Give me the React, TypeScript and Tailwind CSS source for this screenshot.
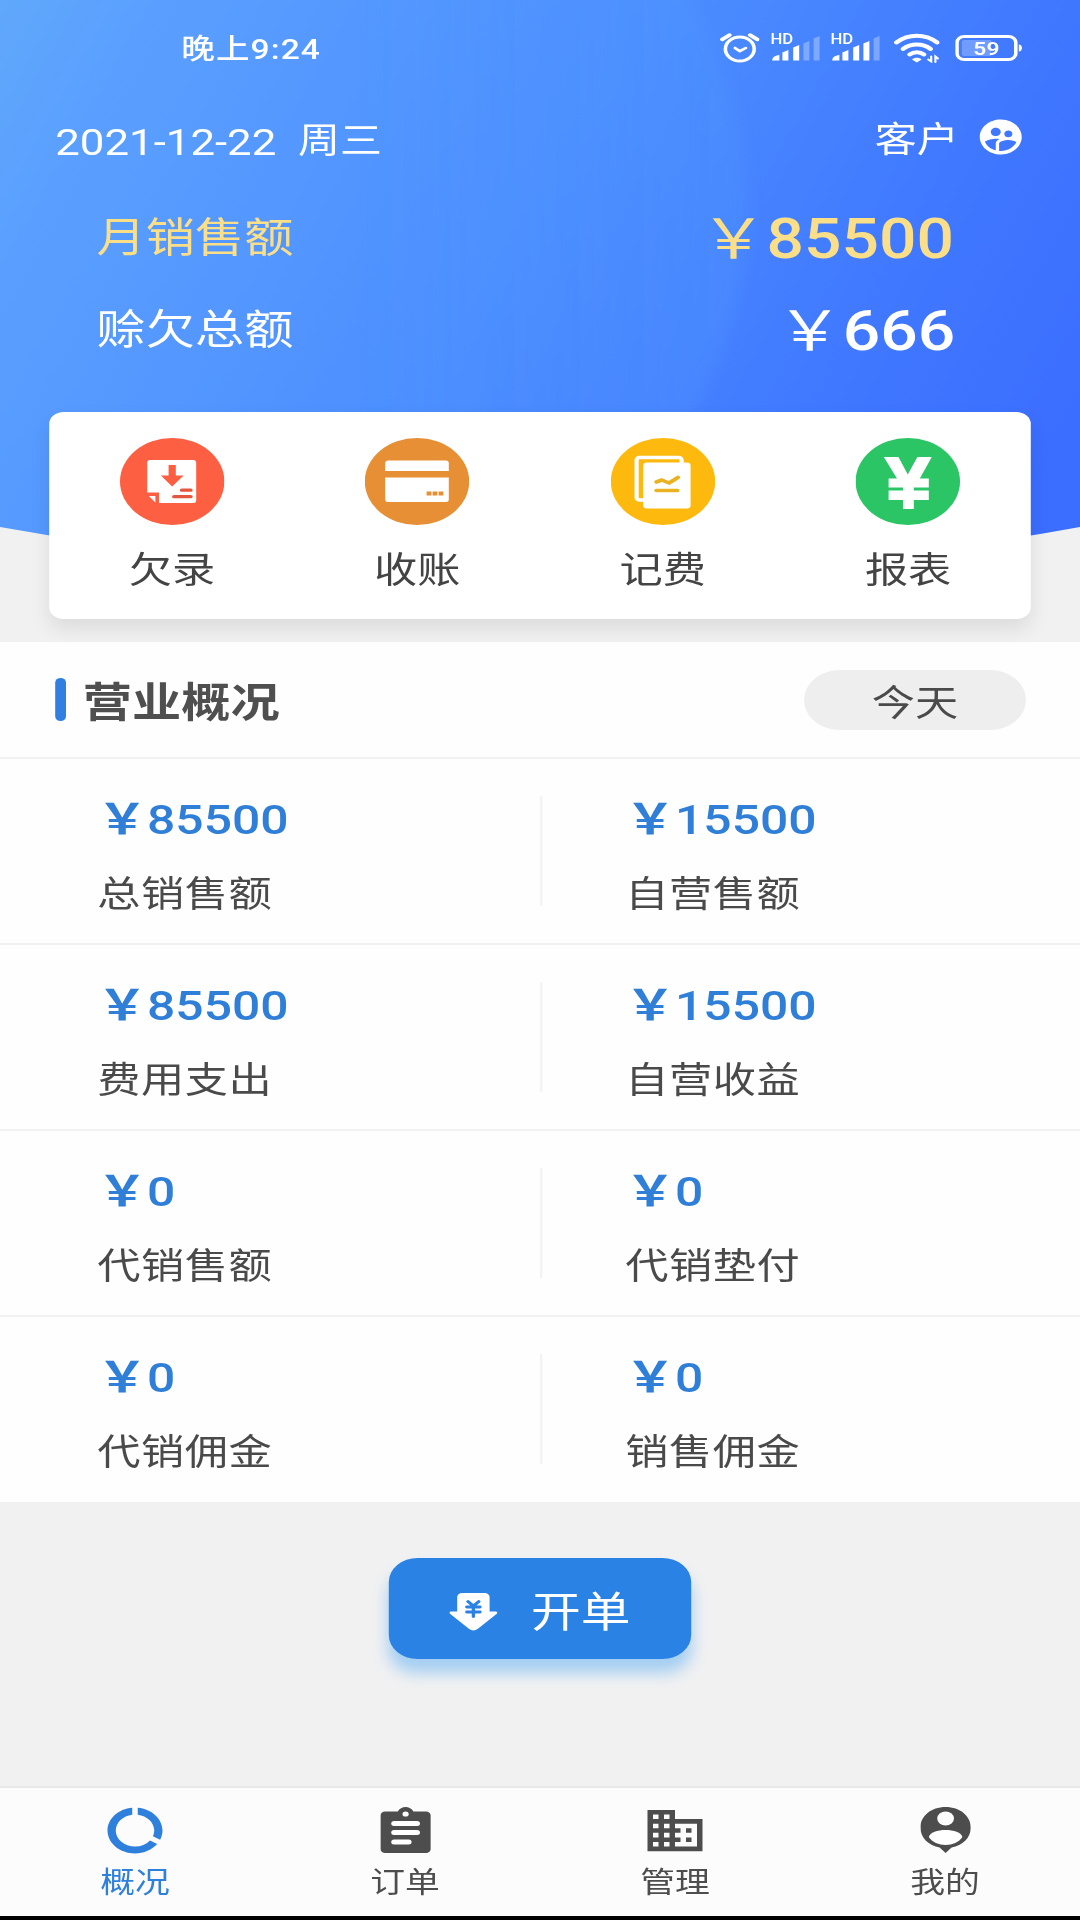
import { ReactNode } from 'react';
import { MdBusiness, MdDataUsage, MdSupervisedUserCircle } from 'react-icons/md';

const STATS = [
  [
    { value: '85500', label: '总销售额' },
    { value: '15500', label: '自营售额' },
  ],
  [
    { value: '85500', label: '费用支出' },
    { value: '15500', label: '自营收益' },
  ],
  [
    { value: '0', label: '代销售额' },
    { value: '0', label: '代销垫付' },
  ],
  [
    { value: '0', label: '代销佣金' },
    { value: '0', label: '销售佣金' },
  ],
];

function AlarmIcon() {
  return (
    <svg width="33" height="30" viewBox="0 0 33 30" fill="none" stroke="currentColor" strokeLinecap="round">
      <circle cx="16.5" cy="16" r="12" strokeWidth="3" />
      <path d="M1.8 6.5 8 2M31.2 6.5 25 2" strokeWidth="3.4" />
      <path d="m12.500 15 4 3.200 5-3.200" strokeWidth="2.600" strokeLinejoin="round" />
    </svg>
  );
}

function SignalIcon({ level }: { level: number }) {
  const bars = [
    'M1.5 30.500c0-3 2-5 6-5.500v5.500z',
    'M10 30.500v-8l5-2.500v10.500z',
    'M19 30.500v-13l5-2.500v15.500z',
    'M27.500 30.500v-17l5-2.500v19.500z',
    'M36 30.500V8.500l5-2.500v24.500z',
  ];
  return (
    <svg className="overflow-visible" width="42" height="36" viewBox="0 0 42 36" fill="currentColor">
      <text x="0" y="14.500" fontSize="14" fontWeight="500" textLength="19" lengthAdjust="spacingAndGlyphs">HD</text>
      {bars.map((d, i) => (
        <path key={d} d={d} opacity={i < level ? 1 : 0.3} />
      ))}
    </svg>
  );
}

function WifiIcon() {
  return (
    <svg width="38" height="30" viewBox="0 0 38 30" fill="none" stroke="currentColor" strokeLinecap="round">
      <path d="M2 9.500C12 .5 26 .5 36 9.500" strokeWidth="4" />
      <path d="M7.500 16c6.500-6 16.500-6 23 0" strokeWidth="4" />
      <path d="M13 21.500c3.500-3 8.500-3 12 0" strokeWidth="4" />
      <path d="M15 26.500c2-2.500 6-2.500 8 0l-4 3z" fill="currentColor" stroke="none" />
      <path d="M31 23.500v5l-2.500-2M34.500 29v-5.500l2 2" strokeWidth="1.800" />
    </svg>
  );
}

function BatteryIcon() {
  return (
    <svg width="56" height="26" viewBox="0 0 56 26" fill="none">
      <rect x="1.500" y="1.500" width="49" height="23" rx="6" stroke="currentColor" strokeWidth="3" />
      <path d="M7.500 5H30v16H7.500a2 2 0 0 1-2-2V7a2 2 0 0 1 2-2z" fill="currentColor" opacity="0.25" />
      <path d="M53 9.500c3.500 0 3.500 7 0 7z" fill="currentColor" />
      <text x="26" y="19.800" fontSize="19" fontWeight="600" fill="currentColor" textAnchor="middle">59</text>
    </svg>
  );
}

function DebtIcon() {
  return (
    <svg width="87" height="87" viewBox="0 0 87 87">
      <circle cx="43.500" cy="43.500" r="43.500" fill="#fc5f42" />
      <path d="M25 22h36a2.500 2.500 0 0 1 2.500 2.500v38A2.500 2.500 0 0 1 61 65H32.500V54.500H22.700v-30A2.500 2.500 0 0 1 25 22z" fill="#fff" />
      <path d="M24 58h5.500v6.500z" fill="#fff" />
      <path d="M40.500 27h6v10.500h6.500L43.500 48.500 34 37.500h6.500z" fill="#fc5f42" />
      <path d="M51.500 52.200h7.500M45 58.700h14" stroke="#e4563d" strokeWidth="3.200" strokeLinecap="round" />
    </svg>
  );
}

function CardIcon() {
  return (
    <svg width="87" height="87" viewBox="0 0 87 87">
      <circle cx="43.500" cy="43.500" r="43.500" fill="#e68f35" />
      <path d="M19.500 22.500h48a2.500 2.500 0 0 1 2.500 2.500v8H17v-8a2.500 2.500 0 0 1 2.500-2.500zM17 39.500h53v22a2.500 2.500 0 0 1-2.500 2.500h-48a2.500 2.500 0 0 1-2.500-2.500z" fill="#fff" />
      <path d="M51.500 55.500h14" stroke="#e68f35" strokeWidth="3.800" strokeDasharray="4 1" />
    </svg>
  );
}

function FeeIcon() {
  return (
    <svg width="87" height="87" viewBox="0 0 87 87">
      <circle cx="43.500" cy="43.500" r="43.500" fill="#fdb90e" />
      <path d="M28 62h-4a2.500 2.500 0 0 1-2.500-2.500V22a2.500 2.500 0 0 1 2.500-2.500h32.500A2.500 2.500 0 0 1 59 22v4" fill="none" stroke="#fff" strokeWidth="3.500" />
      <rect x="27" y="24.500" width="39.500" height="46" rx="3" fill="#fff" />
      <path d="m38 44 4.500-2 6 3 7.500-5.500M38 52.500h17.500" fill="none" stroke="#eab223" strokeWidth="3.600" strokeLinecap="round" strokeLinejoin="round" />
    </svg>
  );
}

function ReportIcon() {
  return (
    <svg width="87" height="87" viewBox="0 0 87 87">
      <circle cx="43.500" cy="43.500" r="43.500" fill="#2bc566" />
      <path d="M23.500 19h12.200L43.500 36.500 51.500 19h12L53.500 40.500h7.500v9H48.500v3H61V62H48.500v9H39.500v-9H27.500v-9.500h12v-3h-12v-9h7z" fill="#fff" />
    </svg>
  );
}

function BillIcon() {
  return (
    <svg width="41" height="38" viewBox="0 0 41 38">
      <path
        d="M11 0h19a4 4 0 0 1 4 4v14.500h4.500c2 0 2.500 1.500 1 2.800L24 36a5 5 0 0 1-7 0L1.500 21.300c-1.500-1.300-1-2.800 1-2.800H7V4a4 4 0 0 1 4-4z"
        fill="#fff"
      />
      <path d="m16 8.500 4.500 4.500 4.500-4.500M15 14h11M15 19h11M20.500 14v9.500" fill="none" stroke="#2a82e4" strokeWidth="2.800" strokeLinecap="round" />
    </svg>
  );
}

function OrderIcon() {
  return (
    <svg width="42" height="46" viewBox="0 0 42 46">
      <path d="M4 4.500h10.500C17-1.500 25-1.500 27.500 4.500H38a4 4 0 0 1 4 4V42a4 4 0 0 1-4 4H4a4 4 0 0 1-4-4V8.500a4 4 0 0 1 4-4z" fill="#4d4d4d" />
      <circle cx="21" cy="7" r="2.600" fill="#fff" />
      <path d="M11.500 16.500h19M11.500 25.500h19M11.500 35h12" stroke="#fff" strokeWidth="5" strokeLinecap="round" />
    </svg>
  );
}

function MineIcon() {
  return (
    <svg width="42" height="46" viewBox="0 0 42 46">
      <path d="M21 0C33 0 42 9 42 20.500 42 31 35 38.500 26 40.500L21 46l-5-5.500C7 38.500 0 31 0 20.500 0 9 9 0 21 0z" fill="#4d4d4d" />
      <circle cx="21" cy="11.500" r="7" fill="#fff" />
      <path d="M7 30c1.500-9.500 26.500-9.500 28 0-5.500 10.500-22.500 10.500-28 0z" fill="#fff" />
    </svg>
  );
}

const ACTIONS = [
  { label: '欠录', icon: <DebtIcon /> },
  { label: '收账', icon: <CardIcon /> },
  { label: '记费', icon: <FeeIcon /> },
  { label: '报表', icon: <ReportIcon /> },
];

const TABS = [
  { label: '概况', icon: <MdDataUsage size={55} />, active: true },
  { label: '订单', icon: <OrderIcon /> },
  { label: '管理', icon: <MdBusiness size={55} /> },
  { label: '我的', icon: <MineIcon /> },
];

function HeaderBackground() {
  return (
    <svg className="absolute inset-0" width="900" height="642" viewBox="0 0 900 642">
      <defs>
        <linearGradient id="sky" x1="0" y1="0" x2="900" y2="420" gradientUnits="userSpaceOnUse">
          <stop offset="0" stopColor="#60a8fb" />
          <stop offset="0.12" stopColor="#5a9fff" />
          <stop offset="0.5" stopColor="#4c8eff" />
          <stop offset="0.8" stopColor="#4078ff" />
          <stop offset="1" stopColor="#3b6dff" />
        </linearGradient>
        <linearGradient id="glow" x1="300" y1="0" x2="625" y2="0" gradientUnits="userSpaceOnUse">
          <stop offset="0" stopColor="#5098ff" stopOpacity="0" />
          <stop offset="1" stopColor="#5098ff" stopOpacity="0.3" />
        </linearGradient>
        <filter id="soft">
          <feGaussianBlur stdDeviation="6" />
        </filter>
      </defs>
      <path d="M0 0h900v527Q450 625 0 527z" fill="url(#sky)" />
      <path d="M300-20h265Q680 215 565 440L450 560H300z" fill="url(#glow)" filter="url(#soft)" />
    </svg>
  );
}

function HeaderAmount({ children }: { children: ReactNode }) {
  return (
    <div className="flex items-baseline text-[55px]">
      <span>￥</span>
      <span className="font-medium">{children}</span>
    </div>
  );
}

export default function App() {
  return (
    <div className="h-[1920px] w-[1080px] overflow-hidden">
      <div className="flex h-[1920px] w-[900px] origin-top-left scale-x-[1.2] flex-col bg-[#f1f1f2] font-[Roboto,'Noto_Sans_CJK_SC',sans-serif] text-[#4a4a4a]">
        <header className="relative h-[642px] shrink-0">
          <HeaderBackground />
          <div className="relative text-white">
            <div className="flex h-24 items-center pr-12 pl-[151px]">
              <span className="pt-[3px] text-[28px] font-medium tracking-[0.9px]">晚上9:24</span>
              <div className="ml-auto flex items-center">
                <AlarmIcon />
                <div className="ml-[9px] flex gap-2">
                  <SignalIcon level={3} />
                  <SignalIcon level={4} />
                </div>
                <div className="ml-[11px]"><WifiIcon /></div>
                <div className="ml-[13px]"><BatteryIcon /></div>
              </div>
            </div>

            <div className="flex h-[88px] items-center pr-[45px] pl-[46px] text-[35px]">
              <span className="pt-1.5 text-[36.5px]">2021-12-22</span>
              <span className="ml-[18px] pt-1">周三</span>
              <span className="ml-auto pt-[3px]">客户</span>
              <MdSupervisedUserCircle className="mb-[7px] ml-[14px]" size={42} />
            </div>

            <div className="flex h-[106px] items-center justify-between pt-1 pr-[105px] pl-[80.5px] text-[41px] text-[#fbdf88]">
              <span>月销售额</span>
              <HeaderAmount>85500</HeaderAmount>
            </div>
            <div className="flex h-[80px] items-center justify-between pt-0.5 pr-[104px] pl-[80.5px] text-[41px]">
              <span>赊欠总额</span>
              <HeaderAmount>666</HeaderAmount>
            </div>

            <div className="mx-[41px] mt-[42px] flex h-[207px] rounded-[12px] bg-white text-[#444] shadow-[0_10px_18px_rgba(0,0,0,0.09)]">
              {ACTIONS.map((action) => (
                <div key={action.label} className="flex flex-1 flex-col items-center pt-[26px]">
                  {action.icon}
                  <span className="mt-[22px] text-[36px] leading-[48px]">{action.label}</span>
                </div>
              ))}
            </div>
          </div>
        </header>

        <section className="h-[860px] shrink-0 bg-[#fefefe]">
          <div className="flex h-[115px] items-center pr-[45px] pl-[46px]">
            <div className="h-[43px] w-[9px] rounded-full bg-[#2f80e0]" />
            <h2 className="ml-[14px] pt-2 text-[41px] font-bold text-[#4f4f4f]">营业概况</h2>
            <button className="ml-auto h-[60px] w-[185px] rounded-full bg-[#eeeeee] pt-1 text-[36px] leading-[60px]">今天</button>
          </div>

          {STATS.map((row, i) => (
            <div key={i} className="flex h-[186px] items-center border-t-2 border-[#f1f1f3]">
              {row.map((stat, j) => (
                <div key={j} className="flex h-[110px] w-[450px] flex-col pt-[3px] pl-[81px] last:border-l-2 last:border-[#f3f3f4] last:pl-[69px]">
                  <div className="flex items-baseline text-[41.5px] leading-[42px] font-medium text-[#2f7fd8]">
                    <span className="font-bold">￥</span>
                    <span>{stat.value}</span>
                  </div>
                  <span className="mt-[30px] text-[36px] leading-[48px] tracking-[0.5px]">{stat.label}</span>
                </div>
              ))}
            </div>
          ))}
        </section>

        <div className="flex flex-1 justify-center pt-14">
          <button className="flex h-[101px] w-[252px] items-center justify-center rounded-[24px] bg-[#2a82e4] text-[41.5px] text-white shadow-[0_14px_14px_rgba(70,165,245,0.45)]">
            <div className="pt-1.5"><BillIcon /></div>
            <span className="ml-[27px] pt-2.5">开单</span>
          </button>
        </div>

        <nav className="flex h-[134px] shrink-0 border-t-2 border-b-4 border-t-[#e9e9ea] border-b-black bg-[#fcfcfd]">
          {TABS.map((tab) => (
            <div key={tab.label} className={`flex flex-1 flex-col items-center pt-3 ${tab.active ? 'text-[#2f80dc]' : 'text-[#4d4d4d]'}`}>
              <div className="flex h-[60px] items-center">{tab.icon}</div>
              <span className="mt-[3px] text-[29px] leading-[40px]">{tab.label}</span>
            </div>
          ))}
        </nav>
      </div>
    </div>
  );
}
